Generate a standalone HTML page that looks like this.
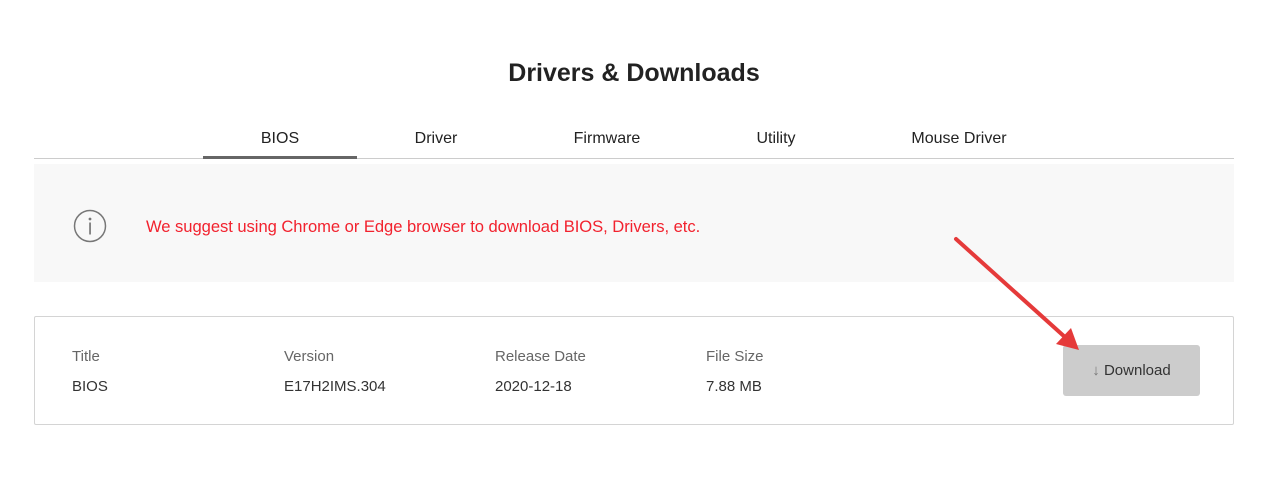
<!DOCTYPE html>
<html><head><meta charset="utf-8"><style>
body{margin:0;width:1281px;height:482px;background:#fff;font-family:"Liberation Sans",sans-serif;position:relative;overflow:hidden;color:#222}
.a{position:absolute}
h1{position:absolute;top:59px;left:0;width:1268px;text-align:center;margin:0;font-size:25px;font-weight:bold;color:#222}
.tab{position:absolute;top:130px;font-size:16px;color:#222;text-align:center}
.lbl{position:absolute;top:348px;font-size:15px;color:#666}
.val{position:absolute;top:378px;font-size:15px;color:#333}
</style></head><body>
<h1>Drivers &amp; Downloads</h1>
<div class="tab" style="left:203px;width:154px">BIOS</div>
<div class="tab" style="left:396px;width:80px">Driver</div>
<div class="tab" style="left:557px;width:100px">Firmware</div>
<div class="tab" style="left:736px;width:80px">Utility</div>
<div class="tab" style="left:889px;width:140px">Mouse Driver</div>
<div class="a" style="left:34px;top:158px;width:1200px;height:1px;background:#ccc"></div>
<div class="a" style="left:203px;top:156px;width:154px;height:3px;background:#666"></div>
<div class="a" style="left:34px;top:164px;width:1200px;height:118px;background:#f8f8f8"></div>
<svg class="a" style="left:73px;top:209px" width="34" height="34"><circle cx="17" cy="17" r="15.5" fill="none" stroke="#777" stroke-width="1.5"/><circle cx="17" cy="10" r="1.4" fill="#777"/><rect x="16.2" y="13.5" width="1.7" height="12" fill="#777"/></svg>
<div class="a" style="left:146px;top:217px;font-size:16.6px;color:#f2222e;letter-spacing:-0.05px">We suggest using Chrome or Edge browser to download BIOS, Drivers, etc.</div>
<div class="a" style="left:34px;top:316px;width:1198px;height:107px;border:1px solid #d4d4d4;border-radius:2px"></div>
<div class="lbl" style="left:72px">Title</div><div class="val" style="left:72px">BIOS</div>
<div class="lbl" style="left:284px">Version</div><div class="val" style="left:284px">E17H2IMS.304</div>
<div class="lbl" style="left:495px">Release Date</div><div class="val" style="left:495px">2020-12-18</div>
<div class="lbl" style="left:706px">File Size</div><div class="val" style="left:706px">7.88 MB</div>
<div class="a" style="left:1063px;top:345px;width:137px;height:51px;background:#cccccc;border-radius:3px;font-size:15px;color:#333;text-align:center;line-height:52px"><span style="color:#777">↓</span> Download</div>
<svg class="a" style="left:0;top:0" width="1281" height="482"><line x1="956" y1="239" x2="1066" y2="338" stroke="#e53a3a" stroke-width="4" stroke-linecap="round"/><polygon points="1079,350 1056,344 1071,328" fill="#e53a3a"/></svg>
</body></html>
